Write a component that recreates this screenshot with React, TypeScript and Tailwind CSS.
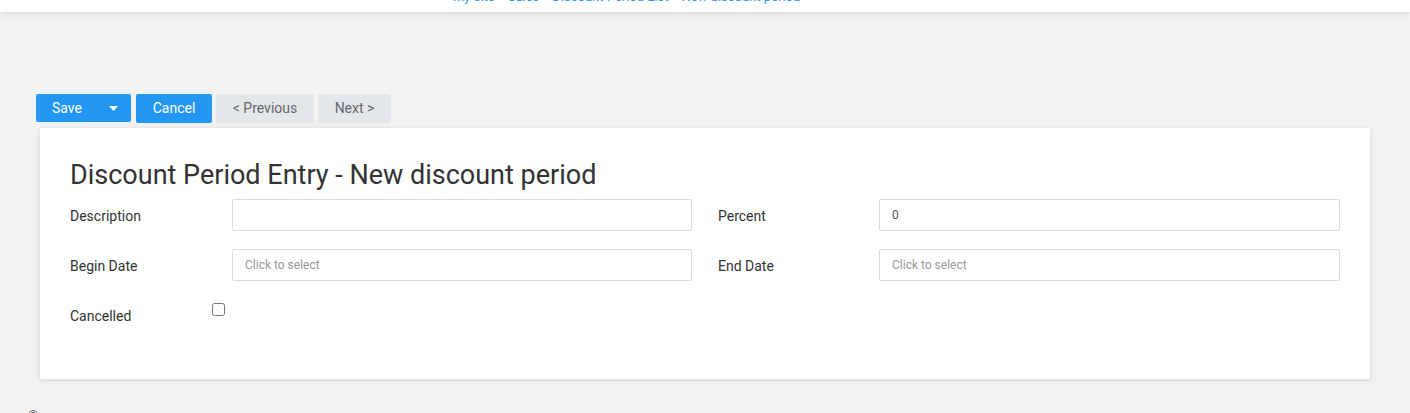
import React from 'react'

const crumbs = ['My site', 'Sales', 'Discount Period List', 'New discount period']

function Field({ label, value, placeholder, labelWidth = 'w-[162px]' }: { label: string; value?: string; placeholder?: string; labelWidth?: string }) {
    return (
        <div className="flex items-center h-8">
            <label className={`${labelWidth} shrink-0 text-[14px] text-[#333] pt-[2px]`}>{label}</label>
            <input
                readOnly
                value={value ?? ''}
                placeholder={placeholder}
                className="flex-1 h-8 px-3 text-[12px] text-[#555] placeholder:text-[#999] border border-[#dcdcdc] rounded-[2px] bg-white outline-none"
            />
        </div>
    )
}

export default function App() {
    return (
        <div className="min-h-[413px] bg-[#f2f2f2] font-['Roboto',sans-serif] overflow-hidden">
            <div className="h-3 bg-white shadow-[0_1px_6px_rgba(0,0,0,0.12)] overflow-hidden relative z-10">
                <div className="flex pl-[453px] -mt-[11px] text-[13px] leading-4 text-[#2196f3]">
                    {crumbs.map((c, i) => (
                        <span key={i} className="flex">
                            {i > 0 && <span className="w-[13px]" />}
                            {c}
                        </span>
                    ))}
                </div>
            </div>

            <div className="flex pl-9 pt-[82px]">
                <button className="flex items-center h-7 w-[95px] rounded-[2px] bg-[#2196f3] text-white text-[14px] pl-4">
                    <span>Save</span>
                    <svg className="ml-auto mr-[13px]" width="9" height="5" viewBox="0 0 9 5">
                        <path d="M0 0h9L4.5 5z" fill="white" />
                    </svg>
                </button>
                <button className="ml-[5px] h-[29px] w-[76px] rounded-[2px] bg-[#2196f3] text-white text-[14px]">Cancel</button>
                <button className="ml-1 h-[29px] w-[98px] rounded-[2px] bg-[#e4e7ea] text-[#666] text-[14px]">&lt; Previous</button>
                <button className="ml-1 h-[29px] w-[73px] rounded-[2px] bg-[#e4e7ea] text-[#666] text-[14px]">Next &gt;</button>
            </div>

            <div className="mx-10 mt-[5px] bg-white shadow-[0_1px_5px_rgba(0,0,0,0.13)] px-[30px] pt-[30px] pb-[48px]">
                <h1 className="text-[27px] leading-[34px] text-[#333] mb-[7px]">Discount Period Entry - New discount period</h1>
                <div className="grid grid-cols-2 gap-x-[26px] gap-y-[18px]">
                    <Field label="Description" />
                    <Field label="Percent" value="0" labelWidth="w-[161px]" />
                    <Field label="Begin Date" placeholder="Click to select" />
                    <Field label="End Date" placeholder="Click to select" labelWidth="w-[161px]" />
                    <div className="flex h-8">
                        <label className="w-[142px] shrink-0 text-[14px] text-[#333] pt-[7px]">Cancelled</label>
                        <input type="checkbox" className="mt-1 w-[13px] h-[13px]" />
                    </div>
                </div>
            </div>

            <div className="pl-7 pt-[27px] text-[13px] text-[#555]">©</div>
        </div>
    )
}
